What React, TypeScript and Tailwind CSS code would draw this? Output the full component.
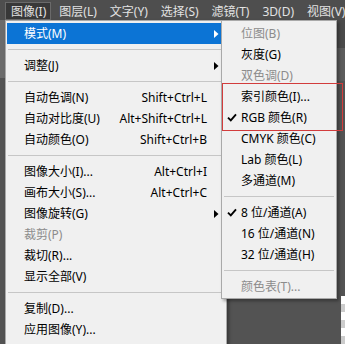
import React from 'react';

type Item =
  | 'sep'
  | { t: string; k?: string; arrow?: boolean; active?: boolean; dis?: boolean; check?: boolean };

const mainItems: Item[] = [
  { t: '模式(M)', arrow: true, active: true },
  'sep',
  { t: '调整(J)', arrow: true },
  'sep',
  { t: '自动色调(N)', k: 'Shift+Ctrl+L' },
  { t: '自动对比度(U)', k: 'Alt+Shift+Ctrl+L' },
  { t: '自动颜色(O)', k: 'Shift+Ctrl+B' },
  'sep',
  { t: '图像大小(I)...', k: 'Alt+Ctrl+I' },
  { t: '画布大小(S)...', k: 'Alt+Ctrl+C' },
  { t: '图像旋转(G)', arrow: true },
  { t: '裁剪(P)', dis: true },
  { t: '裁切(R)...' },
  { t: '显示全部(V)' },
  'sep',
  { t: '复制(D)...' },
  { t: '应用图像(Y)...' },
];

const subItems: Item[] = [
  { t: '位图(B)', dis: true },
  { t: '灰度(G)' },
  { t: '双色调(D)', dis: true },
  { t: '索引颜色(I)...' },
  { t: 'RGB 颜色(R)', check: true },
  { t: 'CMYK 颜色(C)' },
  { t: 'Lab 颜色(L)' },
  { t: '多通道(M)' },
  'sep',
  { t: '8 位/通道(A)', check: true },
  { t: '16 位/通道(N)' },
  { t: '32 位/通道(H)' },
  'sep',
  { t: '颜色表(T)...', dis: true },
];

const menuBar = ['图像(I)', '图层(L)', '文字(Y)', '选择(S)', '滤镜(T)', '3D(D)', '视图(V)'];

const Arrow = ({ white }: { white?: boolean }) => (
  <svg width="5" height="8" viewBox="0 0 5 8">
    <polygon points="0,0 4.5,4 0,8" fill={white ? '#ffffff' : '#000000'} />
  </svg>
);

const Check = () => (
  <svg width="10" height="9" viewBox="0 0 10 9">
    <path d="M1 4.6 L3.8 7.4 L9 1.4" stroke="#000" strokeWidth="1.9" fill="none" />
  </svg>
);

const Sep = () => (
  <div className="h-[11px] flex items-center px-[2px]">
    <div className="h-px w-full bg-[#c6c6c6]" />
  </div>
);

export default function App() {
  return (
    <div
      className="relative w-[345px] h-[344px] overflow-hidden bg-[#535353] text-[12px]"
      style={{ fontFamily: '"Noto Sans", "Noto Sans CJK SC", sans-serif' }}
    >
      {/* menu bar */}
      <div className="h-[20px] flex items-start pt-[2px] bg-[#4e4e4e] pl-[5px] text-[#e2e2e2]">
        {menuBar.map((m, i) => (
          <div
            key={m}
            className={
              i === 0
                ? 'h-[18px] leading-[17px] pl-[5px] pr-[4px] mr-[8px] bg-[#383838] border border-[#6a6a6a] whitespace-nowrap'
                : 'h-[18px] leading-[19px] mr-[13px] whitespace-nowrap'
            }
          >
            {m}
          </div>
        ))}
      </div>

      {/* workspace behind the menus */}
      <div className="flex h-[324px]">
        <div className="w-[5px] flex flex-col">
          <div className="h-[58px] bg-[#6b6b6b]" />
          <div className="flex-1 bg-[#535353]" />
        </div>
        <div className="flex-1" />
        <div className="w-[8px] flex flex-col">
          <div className="h-[28px] bg-[#4a4a4a]" />
          <div className="h-[34px] bg-[#5c5c5c]" />
          <div className="h-[218px] bg-[#535353]" />
          <div className="flex flex-col pl-[4px] flex-1">
            <div className="h-[8px] bg-[#ffffff]" />
            <div className="h-[8px] bg-[#cccccc]" />
            <div className="h-[8px] bg-[#ffffff]" />
            <div className="h-[8px] bg-[#cccccc]" />
            <div className="h-[8px] bg-[#ffffff]" />
            <div className="h-[8px] bg-[#cccccc]" />
          </div>
        </div>
      </div>

      {/* main dropdown */}
      <div className="absolute left-[5px] top-[20px] w-[222px] h-[340px] bg-[#f0f0f0] border border-[#a9a9a9] pt-[2px] shadow-[2px_2px_3px_rgba(0,0,0,0.35)]">
        {mainItems.map((it, i) =>
          it === 'sep' ? (
            <Sep key={i} />
          ) : (
            <div
              key={i}
              className={`h-[21px] mx-px flex items-center pl-[17px] pr-[6px] leading-none ${
                it.active ? 'bg-[#0c74d5] text-white' : it.dis ? 'text-[#8c8c8c]' : 'text-black'
              }`}
            >
              <span className="flex-1">{it.t}</span>
              {it.k && <span className="mr-[12px]">{it.k}</span>}
              {it.arrow && <Arrow white={it.active} />}
            </div>
          )
        )}
      </div>

      {/* submenu */}
      <div className="absolute left-[221px] top-[20px] w-[116px] h-[279px] bg-[#f0f0f0] border border-[#a9a9a9] pt-[2px] shadow-[2px_2px_3px_rgba(0,0,0,0.35)]">
        {subItems.map((it, i) =>
          it === 'sep' ? (
            <Sep key={i} />
          ) : (
            <div
              key={i}
              className={`h-[21px] flex items-center leading-none ${it.dis ? 'text-[#8c8c8c]' : 'text-black'}`}
            >
              <span className="w-[19px] flex justify-center pl-[1px]">{it.check && <Check />}</span>
              <span>{it.t}</span>
            </div>
          )
        )}
      </div>

      {/* red annotation box */}
      <div className="absolute left-[222px] top-[83px] w-[121px] h-[48px] border border-[#d23c3c]" />
    </div>
  );
}
